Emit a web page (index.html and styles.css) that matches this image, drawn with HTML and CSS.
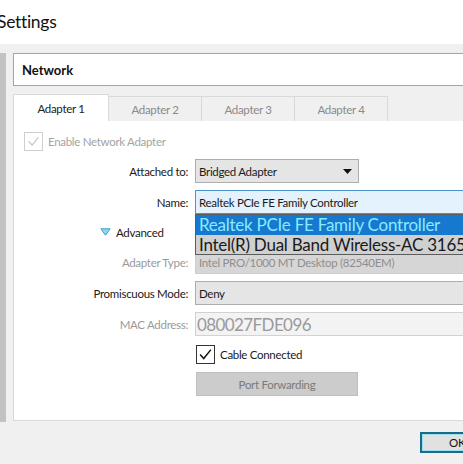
FILE: index.html
```html
<!DOCTYPE html>
<html>
<head>
<meta charset="utf-8">
<link rel="stylesheet" href="styles.css">
</head>
<body>
<div class="window">
  <div class="titlebar"><span class="title">Settings</span></div>
  <div class="main">
    <div class="sidebar"></div>
    <div class="content">
      <div class="section-header">Network</div>
      <div class="tabs">
        <div class="tab active">Adapter 1</div>
        <div class="tab">Adapter 2</div>
        <div class="tab">Adapter 3</div>
        <div class="tab">Adapter 4</div>
      </div>
      <div class="panel">
        <div class="check-row enable disabled">
          <span class="checkbox"><svg viewBox="0 0 19 19" width="19" height="19"><path d="M4 9.5 L8 13.5 L15 5" fill="none" stroke="#c4c4c4" stroke-width="1.3"/></svg></span>
          <span>Enable Network Adapter</span>
        </div>
        <div class="form">
          <div class="label">Attached to:</div>
          <div class="combo attached">
            <span>Bridged Adapter</span>
            <svg class="arrow" viewBox="0 0 9 5" width="9" height="5"><path d="M0 0 H9 L4.5 5 Z" fill="#111"/></svg>
          </div>

          <div class="label">Name:</div>
          <div class="combo name-combo">
            <span>Realtek PCIe FE Family Controller</span>
            <div class="dropdown">
              <div class="item selected">Realtek PCIe FE Family Controller</div>
              <div class="item">Intel(R) Dual Band Wireless-AC 3165</div>
            </div>
          </div>

          <div class="advanced">
            <svg viewBox="0 0 11 8" width="11" height="8"><path d="M0.8 0.8 H10.2 L5.5 7.2 Z" fill="#8fd6f2" stroke="#3b9fd0" stroke-width="1"/></svg>
            <span>Advanced</span>
          </div>
          <div></div>

          <div class="label dim">Adapter Type:</div>
          <div class="combo disabled-combo"><span>Intel PRO/1000 MT Desktop (82540EM)</span></div>

          <div class="label">Promiscuous Mode:</div>
          <div class="combo"><span>Deny</span></div>

          <div class="label dim">MAC Address:</div>
          <div class="field mac"><span>080027FDE096</span></div>

          <div></div>
          <div class="check-row cable">
            <span class="checkbox checked"><svg viewBox="0 0 19 19" width="19" height="19"><path d="M3.5 9.5 L7.5 14 L15.5 4" fill="none" stroke="#111" stroke-width="1.6"/></svg></span>
            <span>Cable Connected</span>
          </div>

          <div></div>
          <div class="button disabled-button">Port Forwarding</div>
        </div>
      </div>
    </div>
  </div>
  <div class="footer">
    <div class="ok">OK</div>
  </div>
</div>
</body>
</html>
```

FILE: styles.css
```css
html, body {
  margin: 0;
  padding: 0;
  width: 463px;
  height: 464px;
  overflow: hidden;
  background: #f0f0f0;
}

.window {
  width: 463px;
  height: 464px;
  overflow: hidden;
  font-family: Lato, "Noto Sans", sans-serif;
  font-size: 11.5px;
  letter-spacing: -0.3px;
  color: #1a1a1a;
  display: flex;
  flex-direction: column;
}

.titlebar {
  height: 44px;
  background: #ffffff;
  flex: none;
  display: flex;
  align-items: flex-start;
}

.title {
  font-size: 17.5px;
  letter-spacing: -0.3px;
  margin-left: -3px;
  margin-top: 10px;
  line-height: 24px;
  color: #111;
}

.main {
  display: flex;
  flex: none;
  padding-top: 9px;
  height: 369px;
}

.sidebar {
  width: 6px;
  background: #c2c2c2;
  flex: none;
}

.content {
  margin-left: 7px;
  width: 490px;
  flex: none;
  display: flex;
  flex-direction: column;
}

.section-header {
  height: 31px;
  border: 1px solid #a4a4a4;
  background: #fff;
  font-weight: bold;
  font-size: 13px;
  letter-spacing: 0;
  padding-left: 8px;
  display: flex;
  align-items: center;
  color: #111;
}

.tabs {
  margin-top: 8px;
  height: 27px;
  display: flex;
  align-items: flex-end;
}

.tab {
  width: 93px;
  height: 25px;
  box-sizing: border-box;
  border: 1px solid #d9d9d9;
  border-bottom: none;
  border-left: none;
  background: #f0f0f0;
  color: #8a8a8a;
  display: flex;
  align-items: center;
  justify-content: center;
}

.tab.active {
  height: 27px;
  width: 96px;
  background: #fff;
  color: #222;
  border-left: 1px solid #d9d9d9;
}

.panel {
  height: 300px;
  box-sizing: border-box;
  background: #fff;
  border: 1px solid #d9d9d9;
  border-top: none;
  padding-top: 11px;
}

.check-row {
  display: flex;
  align-items: center;
  gap: 5px;
}

.enable {
  margin-left: 10px;
  height: 19px;
  color: #a3a3a3;
}

.checkbox {
  width: 19px;
  height: 19px;
  box-sizing: border-box;
  border: 1px solid #cfcfcf;
  display: flex;
  align-items: center;
  justify-content: center;
  flex: none;
}

.checkbox svg {
  display: block;
}

.checkbox.checked {
  border-color: #333;
}

.form {
  margin-top: 8px;
  display: grid;
  grid-template-columns: 174px 1fr;
  grid-template-rows: 24px 24px 22px 24px 24px 24px 22px 24px;
  column-gap: 7px;
  row-gap: 7px;
  align-items: center;
}

.label {
  text-align: right;
  color: #1a1a1a;
}

.label.dim {
  color: #9a9a9a;
}

.combo {
  height: 24px;
  box-sizing: border-box;
  border: 1px solid #adadad;
  background: #e5e5e5;
  display: flex;
  align-items: center;
  padding-left: 3px;
  position: relative;
}

.combo.attached {
  width: 164px;
  justify-content: space-between;
  padding-right: 6px;
}

.arrow {
  display: block;
}

.name-combo {
  background: #e3f2fc;
  border-color: #4a93cf;
}

.dropdown {
  position: absolute;
  top: 23px;
  left: -1px;
  right: 0;
  border: 1px solid #5c5c5c;
  background: #d2d2d2;
  z-index: 2;
}

.item {
  height: 19px;
  font-size: 17px;
  letter-spacing: -0.25px;
  line-height: 19px;
  padding-left: 3px;
  color: #1a1a1a;
  background: #d0d0d0;
  white-space: nowrap;
}

.item.selected {
  background: #1778cf;
  color: #86ecff;
  height: 20px;
}

.advanced {
  padding-left: 86px;
  display: flex;
  align-items: center;
  gap: 5px;
  height: 22px;
  color: #1a1a1a;
}

.advanced svg {
  display: block;
}

.disabled-combo {
  background: #d6d6d6;
  border-color: #cccccc;
  color: #8e8e8e;
}

.field {
  height: 24px;
  box-sizing: border-box;
  border: 1px solid #d2d2d2;
  background: #f3f3f3;
  display: flex;
  align-items: center;
  padding-left: 1px;
}

.mac {
  font-size: 17px;
  letter-spacing: -0.6px;
  color: #9a9a9a;
}

.cable {
  margin-left: 1px;
  height: 22px;
  color: #1a1a1a;
}

.button {
  height: 24px;
  width: 162px;
  box-sizing: border-box;
  margin-left: 1px;
  display: flex;
  align-items: center;
  justify-content: center;
}

.disabled-button {
  background: #cccccc;
  border: 1px solid #bfbfbf;
  color: #7a7a7a;
}

.footer {
  flex: 1;
  padding-top: 10px;
  padding-left: 420px;
}

.ok {
  width: 80px;
  height: 21px;
  box-sizing: border-box;
  border: 2px solid #1d6a86;
  background: #e1e1e1;
  box-shadow: inset 0 0 0 1px #9fe0f0;
  padding-left: 27px;
  display: flex;
  align-items: center;
  color: #111;
}
```
